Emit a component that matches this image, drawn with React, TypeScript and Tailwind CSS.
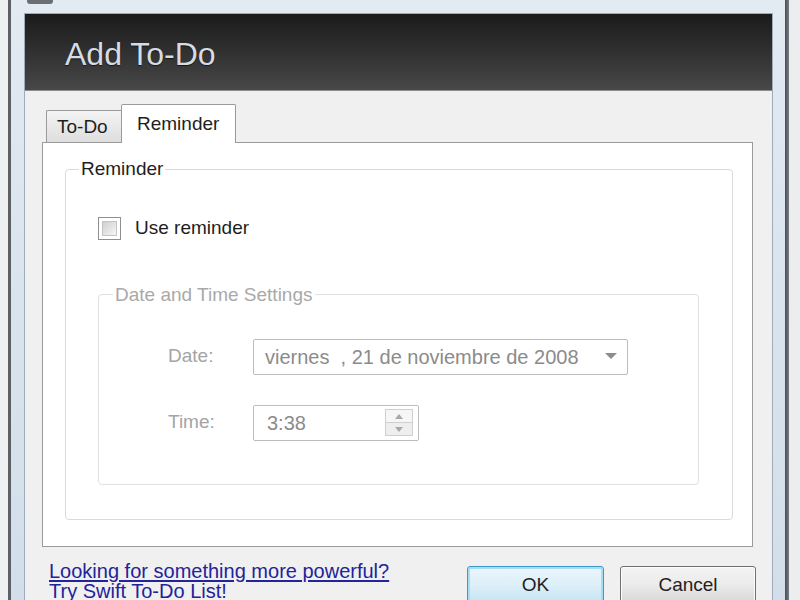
import React from 'react';

const font = { fontFamily: '"Liberation Sans", Arial, sans-serif' };

const Checkbox: React.FC = () => (
  <div className="w-[23px] h-[23px] border border-[#8e8f8f] bg-white p-[3px] shrink-0">
    <div className="w-full h-full border border-[#c4c4c4] bg-gradient-to-br from-[#cfcfcf] to-[#f7f7f7]" />
  </div>
);

const Legend: React.FC<{ children: React.ReactNode; muted?: boolean; left: string }> = ({ children, muted, left }) => (
  <legend className={`${left} px-[2px] text-[19px] leading-[22px] ${muted ? 'text-[#a9a9a9]' : 'text-[#1e1e1e]'}`}>
    {children}
  </legend>
);

const DateCombo: React.FC = () => (
  <div className="w-[375px] h-[36px] border border-[#bcbcbc] rounded-[2px] flex items-center pl-[11px] pr-[10px]">
    <span className="flex-1 text-[20px] text-[#8b8b8b] whitespace-pre">viernes  , 21 de noviembre de 2008</span>
    <svg width="12" height="7" viewBox="0 0 12 7">
      <path d="M0 0 L12 0 L6 6 Z" fill="#8c8c8c" />
    </svg>
  </div>
);

const TimeSpinner: React.FC = () => (
  <div className="w-[166px] h-[36px] border border-[#bcbcbc] rounded-[2px] flex items-center pl-[13px] pr-[5px]">
    <span className="flex-1 text-[20px] text-[#8b8b8b]">3:38</span>
    <div className="w-[28px] h-[27px] border border-[#cfcfcf] flex flex-col">
      <div className="flex-1 flex items-center justify-center bg-[#f6f6f6] border-b border-[#cfcfcf]">
        <svg width="8" height="5" viewBox="0 0 8 5"><path d="M4 0 L8 5 L0 5 Z" fill="#a8a8a8" /></svg>
      </div>
      <div className="flex-1 flex items-center justify-center bg-[#eeeeee]">
        <svg width="8" height="5" viewBox="0 0 8 5"><path d="M0 0 L8 0 L4 5 Z" fill="#a8a8a8" /></svg>
      </div>
    </div>
  </div>
);

export default function App() {
  return (
    <div className="w-[800px] h-[600px] overflow-hidden flex bg-[#e9ebed]" style={font}>
      <div className="w-[8px] bg-[#eef0f2]" />
      <div className="w-[3px] bg-[#5d6166]" />

      {/* window frame */}
      <div className="w-[774px] bg-gradient-to-b from-[#e2eaf2] to-[#d2deea] pl-[13px] pr-[12px] pt-[13px] flex flex-col">
        <div className="relative">
          <div className="absolute left-[3px] -top-[13px] w-[26px] h-[4px] rounded-b-[3px] bg-[#6a6f75]" />
        </div>
        <div className="flex-1 border border-[#9eabb8] bg-[#f0f0f0] flex flex-col">
          {/* header */}
          <div className="h-[77px] bg-gradient-to-b from-[#1b1b1b] to-[#484848] border-b border-[#8c8c8c] flex items-center pl-[40px] pt-[3px]">
            <h1 className="text-[32px] text-[#d5dce3] [text-shadow:0_1px_1px_rgba(0,0,0,0.6)]">Add To-Do</h1>
          </div>

          {/* body */}
          <div className="pl-[17px] pr-[19px] pt-[13px] flex flex-col">
            <div className="flex items-end pl-[4px] relative z-10">
              <div className="w-[75px] h-[32px] border-t border-l border-[#9a9a9a] rounded-tl-[2px] bg-gradient-to-b from-[#f4f4f4] to-[#dedede] flex items-center pl-[10px] pt-[2px] text-[19px] text-[#1e1e1e]">
                To-Do
              </div>
              <div className="w-[115px] h-[39px] -mb-px border border-b-0 border-[#9a9a9a] rounded-t-[2px] bg-white flex items-start pl-[15px] pt-[5px] text-[19px] text-[#1e1e1e]">
                Reminder
              </div>
            </div>

            <div className="h-[405px] border border-[#9a9a9a] bg-white pl-[22px] pr-[19px] pt-[15px]">
              <fieldset className="border border-[#dadada] rounded-[4px] h-[362px]">
                <Legend left="ml-[13px]">Reminder</Legend>
                <div className="pl-[32px] pr-[33px]">
                  <div className="flex items-center gap-[14px] mt-[34px]">
                    <Checkbox />
                    <span className="text-[19px] text-[#1e1e1e]">Use reminder</span>
                  </div>

                  <fieldset className="mt-[41px] border border-[#e0e0e0] rounded-[4px] h-[201px]">
                    <Legend left="ml-[14px]" muted>Date and Time Settings</Legend>
                    <div className="grid grid-cols-[85px_auto] items-center gap-y-[30px] mt-[33px] pl-[69px] justify-start">
                      <span className="text-[19px] text-[#a4a4a4]">Date:</span>
                      <DateCombo />
                      <span className="text-[19px] text-[#a4a4a4]">Time:</span>
                      <TimeSpinner />
                    </div>
                  </fieldset>
                </div>
              </fieldset>
            </div>
          </div>

          {/* footer */}
          <div className="flex justify-between items-start pl-[24px] pr-[16px] mt-[14px]">
            <div className="text-[20px] leading-[20px] text-[#23239a] underline underline-offset-2">
              <div>Looking for something more powerful?</div>
              <div>Try Swift To-Do List!</div>
            </div>
            <div className="flex gap-[16px] mt-[5px]">
              <button className="w-[137px] h-[38px] rounded-[3px] border border-[#3c9ac9] shadow-[inset_0_0_0_2px_#a8dcf4] bg-gradient-to-b from-[#eaf6fc] via-[#ddeff8] to-[#c4e4f4] text-[19px] text-[#1e1e1e]">
                OK
              </button>
              <button className="w-[136px] h-[38px] rounded-[3px] border border-[#707070] shadow-[inset_0_0_0_1px_#fcfcfc] bg-gradient-to-b from-[#f3f3f3] via-[#ebebeb] to-[#d6d6d6] text-[19px] text-[#1e1e1e]">
                Cancel
              </button>
            </div>
          </div>
        </div>
      </div>

      <div className="w-[4px] bg-gradient-to-r from-[#4a4e53] to-[#7a7f85]" />
      <div className="flex-1 bg-[#ebedef]" />
    </div>
  );
}
